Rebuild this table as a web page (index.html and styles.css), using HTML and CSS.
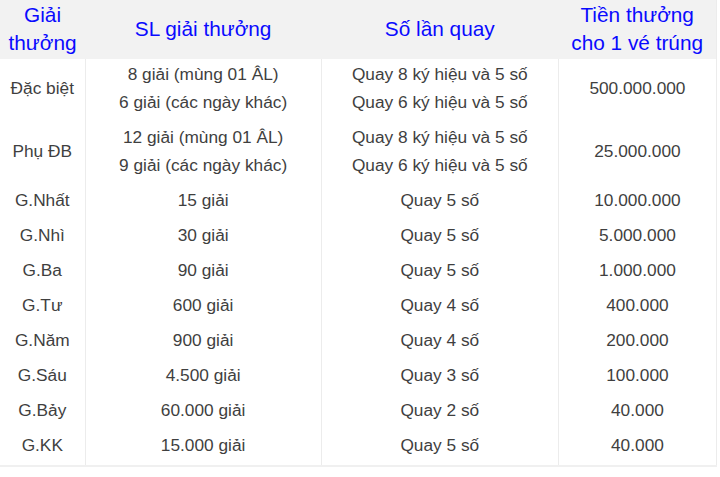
FILE: index.html
```html
<!DOCTYPE html>
<html lang="vi">
<head>
<meta charset="utf-8">
<title>Cơ cấu giải thưởng</title>
<link rel="stylesheet" href="styles.css">
</head>
<body>
<table class="prize-table">
  <colgroup>
    <col class="c1"><col class="c2"><col class="c3"><col class="c4">
  </colgroup>
  <thead>
    <tr>
      <th>Giải<br>thưởng</th>
      <th>SL giải thưởng</th>
      <th>Số lần quay</th>
      <th>Tiền thưởng<br>cho 1 vé trúng</th>
    </tr>
  </thead>
  <tbody>
    <tr>
      <td>Đặc biệt</td>
      <td>8 giải (mùng 01 ÂL)<br>6 giải (các ngày khác)</td>
      <td>Quay 8 ký hiệu và 5 số<br>Quay 6 ký hiệu và 5 số</td>
      <td>500.000.000</td>
    </tr>
    <tr>
      <td>Phụ ĐB</td>
      <td>12 giải (mùng 01 ÂL)<br>9 giải (các ngày khác)</td>
      <td>Quay 8 ký hiệu và 5 số<br>Quay 6 ký hiệu và 5 số</td>
      <td>25.000.000</td>
    </tr>
    <tr><td>G.Nhất</td><td>15 giải</td><td>Quay 5 số</td><td>10.000.000</td></tr>
    <tr><td>G.Nhì</td><td>30 giải</td><td>Quay 5 số</td><td>5.000.000</td></tr>
    <tr><td>G.Ba</td><td>90 giải</td><td>Quay 5 số</td><td>1.000.000</td></tr>
    <tr><td>G.Tư</td><td>600 giải</td><td>Quay 4 số</td><td>400.000</td></tr>
    <tr><td>G.Năm</td><td>900 giải</td><td>Quay 4 số</td><td>200.000</td></tr>
    <tr><td>G.Sáu</td><td>4.500 giải</td><td>Quay 3 số</td><td>100.000</td></tr>
    <tr><td>G.Bảy</td><td>60.000 giải</td><td>Quay 2 số</td><td>40.000</td></tr>
    <tr><td>G.KK</td><td>15.000 giải</td><td>Quay 5 số</td><td>40.000</td></tr>
  </tbody>
</table>
</body>
</html>
```

FILE: styles.css
```css
html, body {
  margin: 0;
  padding: 0;
  background: #ffffff;
}

body {
  font-family: "Liberation Sans", Arial, sans-serif;
}

.prize-table {
  width: 717px;
  border-collapse: collapse;
  table-layout: fixed;
  border-right: 1px solid #ececec;
  border-bottom: 2px solid #f0f0f0;
}

.c1 { width: 85px; }
.c2 { width: 236px; }
.c3 { width: 237px; }
.c4 { width: 158px; }

.prize-table th {
  background: #f2f2f2;
  color: #0a0aff;
  font-weight: normal;
  font-size: 20.8px;
  line-height: 28px;
  padding: 1px 0 2px;
  text-align: center;
  vertical-align: middle;
}

.prize-table td {
  color: #3f3f3f;
  font-size: 17.3px;
  line-height: 28px;
  padding: 1px 2px 6px;
  text-align: center;
  vertical-align: middle;
  border-left: 1px solid #ececec;
}

.prize-table td:first-child {
  border-left: none;
}
```
